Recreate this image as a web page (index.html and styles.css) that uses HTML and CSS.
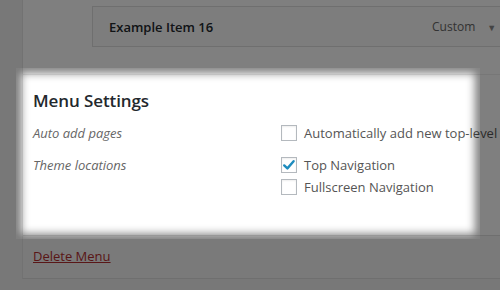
FILE: index.html
```html
<!DOCTYPE html>
<html lang="en">
<head>
  <meta charset="UTF-8">
  <title>Menus</title>
  <link rel="stylesheet" href="styles.css">
</head>
<body>
  <div class="menu-edit">
    <div class="menu-body">
      <div class="menu-item">
        <span class="item-title">Example Item 16</span>
        <span class="item-type">Custom <span class="item-arrow">&#9660;</span></span>
      </div>

      <div class="menu-settings">
        <h3>Menu Settings</h3>
        <div class="setting-row">
          <div class="setting-label">Auto add pages</div>
          <div class="setting-input">
            <label class="check"><span class="box"></span>Automatically add new top-level</label>
          </div>
        </div>
        <div class="setting-row">
          <div class="setting-label">Theme locations</div>
          <div class="setting-input">
            <label class="check"><span class="box checked">
              <svg viewBox="0 0 16 16" width="16" height="16"><path d="M3.2 8.4 L6.4 11.4 L12.6 4.2" fill="none" stroke="#1e8cbe" stroke-width="2.4" stroke-linecap="round" stroke-linejoin="round"/></svg>
            </span>Top Navigation</label>
            <label class="check"><span class="box"></span>Fullscreen Navigation</label>
          </div>
        </div>
      </div>
    </div>

    <div class="menu-footer">
      <a href="#" class="delete-link">Delete Menu</a>
    </div>
  </div>

  <div class="spotlight"></div>
</body>
</html>
```

FILE: styles.css
```css
body {
  margin: 0;
  background-color: #f1f1f1;
  font-family: 'Open Sans', 'Noto Sans', sans-serif;
  color: #444;
  width: 500px;
  height: 290px;
  overflow: hidden;
  position: relative;
}

.menu-edit {
  margin-left: 22px;
  width: 540px;
  background-color: #fff;
  border-left: 1px solid #e5e5e5;
  border-bottom: 1px solid #dfdfdf;
}

.menu-body {
  padding-top: 6px;
}

.menu-item {
  margin-left: 69px;
  height: 39px;
  border: 1px solid #dfdfdf;
  background-color: #fafafa;
  display: flex;
  align-items: center;
  padding-left: 16px;
}

.item-title {
  font-weight: 600;
  font-size: 13px;
  color: #23282d;
  width: 323px;
}

.item-type {
  font-size: 12px;
  color: #666;
}

.item-arrow {
  font-size: 9px;
  color: #888;
  margin-left: 9px;
}

.menu-settings {
  margin-top: 27px;
  border-top: 1px solid #eee;
  padding: 14px 0 27px 10px;
}

.menu-settings h3 {
  margin: 0 0 10px;
  font-size: 17px;
  font-weight: 600;
  color: #23282d;
  letter-spacing: -0.1px;
}

.setting-row {
  display: flex;
  margin-bottom: 10px;
}

.setting-label {
  flex: none;
  width: 248px;
  font-style: italic;
  font-size: 13px;
  color: #666;
  line-height: 22px;
}

.setting-input {
  display: flex;
  flex-direction: column;
}

.check {
  display: flex;
  align-items: center;
  font-size: 13px;
  color: #555;
  line-height: 22px;
  white-space: nowrap;
}

.box {
  flex: none;
  width: 14px;
  height: 14px;
  border: 1px solid #b4b9be;
  background-color: #fff;
  margin-right: 7px;
  box-shadow: inset 0 1px 2px rgba(0, 0, 0, 0.07);
  position: relative;
}

.box svg {
  position: absolute;
  left: -1px;
  top: -1px;
}

.menu-footer {
  border-top: 1px solid #dfdfdf;
  height: 42px;
  padding-left: 10px;
  background-color: #f5f5f5;
}

.delete-link {
  display: inline-block;
  margin-top: 11px;
  font-size: 13px;
  color: #b32d2e;
  text-decoration: underline;
}

.spotlight {
  position: absolute;
  left: 16px;
  top: 68px;
  width: 464px;
  height: 171px;
  box-shadow: 0 0 0 9999px rgba(0, 0, 0, 0.5), inset 0 0 8px 5px rgba(0, 0, 0, 0.5);
}
```
